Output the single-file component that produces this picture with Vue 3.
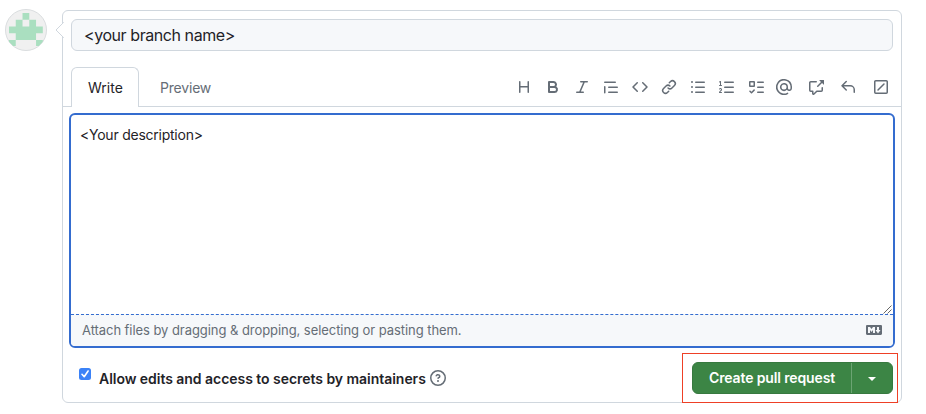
<script setup>
import { ref } from 'vue'

const title = ref('<your branch name>')
const description = ref('<Your description>')

const lines = (x, w) => [2.5, 7.5, 12.5].map(y => `M${x} ${y}h${w}a.75.75 0 0 1 0 1.5h-${w}a.75.75 0 0 1 0-1.5Z`).join('')

const tools = [
  { name: 'Heading', d: 'M3.75 2a.75.75 0 0 1 .75.75V7h7V2.75a.75.75 0 0 1 1.5 0v10.5a.75.75 0 0 1-1.5 0V8.5h-7v4.75a.75.75 0 0 1-1.5 0V2.75A.75.75 0 0 1 3.75 2Z' },
  { name: 'Bold', d: 'M4 2h4.5a3.501 3.501 0 0 1 2.852 5.53A3.499 3.499 0 0 1 9.5 14H4a1 1 0 0 1-1-1V3a1 1 0 0 1 1-1Zm1 7v3h4.5a1.5 1.5 0 0 0 0-3Zm3.5-2a1.5 1.5 0 0 0 0-3H5v3Z' },
  { name: 'Italic', d: 'M6 2.75A.75.75 0 0 1 6.75 2h6.5a.75.75 0 0 1 0 1.5h-2.505l-3.858 9H9.25a.75.75 0 0 1 0 1.5h-6.5a.75.75 0 0 1 0-1.5h2.505l3.858-9H6.75A.75.75 0 0 1 6 2.75Z' },
  { name: 'Quote', d: 'M1.75 2.5h10.5a.75.75 0 0 1 0 1.5H1.75a.75.75 0 0 1 0-1.5Zm4 5h8.5a.75.75 0 0 1 0 1.5h-8.5a.75.75 0 0 1 0-1.5Zm0 5h8.5a.75.75 0 0 1 0 1.5h-8.5a.75.75 0 0 1 0-1.5ZM2.5 7.75v6a.75.75 0 0 1-1.5 0v-6a.75.75 0 0 1 1.5 0Z' },
  { name: 'Code', d: 'm11.28 3.22 4.25 4.25a.75.75 0 0 1 0 1.06l-4.25 4.25a.749.749 0 0 1-1.275-.326.749.749 0 0 1 .215-.734L13.94 8l-3.72-3.72a.749.749 0 0 1 .326-1.275.749.749 0 0 1 .734.215Zm-6.56 0a.751.751 0 0 1 1.042.018.751.751 0 0 1 .018 1.042L2.06 8l3.72 3.72a.749.749 0 0 1-.326 1.275.749.749 0 0 1-.734-.215L.47 8.53a.75.75 0 0 1 0-1.06Z' },
  { name: 'Link', d: 'm7.775 3.275 1.25-1.25a3.5 3.5 0 1 1 4.95 4.95l-2.5 2.5a3.5 3.5 0 0 1-4.95 0 .751.751 0 0 1 .018-1.042.751.751 0 0 1 1.042-.018 1.998 1.998 0 0 0 2.83 0l2.5-2.5a2.002 2.002 0 0 0-2.83-2.83l-1.25 1.25a.751.751 0 0 1-1.042-.018.751.751 0 0 1-.018-1.042Zm-4.69 9.64a1.998 1.998 0 0 0 2.83 0l1.25-1.25a.751.751 0 0 1 1.042.018.751.751 0 0 1 .018 1.042l-1.25 1.25a3.5 3.5 0 1 1-4.95-4.95l2.5-2.5a3.5 3.5 0 0 1 4.95 0 .751.751 0 0 1-.018 1.042.751.751 0 0 1-1.042.018 1.998 1.998 0 0 0-2.83 0l-2.5 2.5a1.998 1.998 0 0 0 0 2.83Z' },
  { name: 'Unordered list', d: lines(5.75, 8.5) + 'M2 14a1 1 0 1 1 0-2 1 1 0 0 1 0 2Zm1-6a1 1 0 1 1-2 0 1 1 0 0 1 2 0ZM2 4a1 1 0 1 1 0-2 1 1 0 0 1 0 2Z' },
  { name: 'Numbered list', d: lines(5.75, 8.5) + 'M.924 10.32a.5.5 0 0 1-.851-.525l.01-.018c.097-.144.215-.273.348-.384.228-.19.588-.392 1.068-.392.468 0 .858.181 1.126.484.259.294.377.673.377 1.038 0 .987-.686 1.495-1.156 1.845l-.047.035c-.303.225-.522.4-.654.597h1.357a.5.5 0 0 1 0 1H.5a.5.5 0 0 1-.5-.5c0-1.005.692-1.52 1.167-1.875l.035-.025c.531-.396.8-.625.8-1.078a.57.57 0 0 0-.128-.376C1.806 10.068 1.695 10 1.5 10a.658.658 0 0 0-.429.163.835.835 0 0 0-.144.153ZM2.003 2.5V6h.503a.5.5 0 0 1 0 1H.5a.5.5 0 0 1 0-1h.503V3.308l-.28.14a.5.5 0 0 1-.446-.895l1.003-.5a.5.5 0 0 1 .723.447Z' },
  { name: 'Task list', d: 'M2 2h4a1 1 0 0 1 1 1v4a1 1 0 0 1-1 1H2a1 1 0 0 1-1-1V3a1 1 0 0 1 1-1Zm4.655 8.595a.75.75 0 0 1 0 1.06L4.03 14.28a.75.75 0 0 1-1.06 0l-1.5-1.5a.749.749 0 0 1 .326-1.275.749.749 0 0 1 .734.215l.97.97 2.095-2.095a.75.75 0 0 1 1.06 0ZM2.5 3.5v3h3v-3Z' + lines(9.75, 5.5) },
  { name: 'Mention', d: 'M4.75 2.37a6.501 6.501 0 0 0 6.5 11.26.75.75 0 0 1 .75 1.298A7.999 7.999 0 0 1 .989 4.148 8 8 0 0 1 16 7.75v1.5a2.75 2.75 0 0 1-5.072 1.475 3.999 3.999 0 0 1-6.65-4.19A4 4 0 0 1 12 8v1.25a1.25 1.25 0 0 0 2.5 0V7.867a6.5 6.5 0 0 0-9.75-5.496ZM10.5 8a2.5 2.5 0 1 0-5 0 2.5 2.5 0 0 0 5 0Z' },
  { name: 'Reference', d: 'M2.75 3.5a.25.25 0 0 0-.25.25v7.5c0 .138.112.25.25.25h2a.75.75 0 0 1 .75.75v2.19l2.72-2.72a.749.749 0 0 1 .53-.22h4.5a.25.25 0 0 0 .25-.25v-2.5a.75.75 0 0 1 1.5 0v2.5A1.75 1.75 0 0 1 13.25 13H9.06l-2.573 2.573A1.458 1.458 0 0 1 4 14.543V13H2.75A1.75 1.75 0 0 1 1 11.25v-7.5C1 2.784 1.784 2 2.75 2h5.5a.75.75 0 0 1 0 1.5ZM16 1.25v4.146a.25.25 0 0 1-.427.177L14.03 4.03l-3.75 3.75a.749.749 0 0 1-1.275-.326.749.749 0 0 1 .215-.734l3.75-3.75-1.543-1.543A.25.25 0 0 1 11.604 1h4.146a.25.25 0 0 1 .25.25Z' },
  { name: 'Saved replies', d: 'M6.78 1.97a.75.75 0 0 1 0 1.06L3.81 6h6.44A4.75 4.75 0 0 1 15 10.75v2.5a.75.75 0 0 1-1.5 0v-2.5a3.25 3.25 0 0 0-3.25-3.25H3.81l2.97 2.97a.749.749 0 0 1-.326 1.275.749.749 0 0 1-.734-.215L1.47 7.28a.75.75 0 0 1 0-1.06l4.25-4.25a.75.75 0 0 1 1.06 0Z' },
  { name: 'Slash commands', d: 'M2.75 1h10.5c.966 0 1.75.784 1.75 1.75v10.5A1.75 1.75 0 0 1 13.25 15H2.75A1.75 1.75 0 0 1 1 13.25V2.75C1 1.784 1.784 1 2.75 1ZM2.5 2.75v10.5c0 .138.112.25.25.25h10.5a.25.25 0 0 0 .25-.25V2.75a.25.25 0 0 0-.25-.25H2.75a.25.25 0 0 0-.25.25Zm9.03 2.78-6 6a.75.75 0 0 1-1.06-1.06l6-6a.75.75 0 0 1 1.06 1.06Z' }
]
</script>

<template>
  <main class="page">
    <svg class="avatar" viewBox="0 0 42 42">
      <circle cx="21" cy="21" r="20.5" fill="#f0f0f0" stroke="#dadddf" />
      <path transform="translate(4 4) scale(6.76)" fill="#aadfc0" d="M2 0h1v1h1v1h1v1h-1v1h-3v-1h-1v-1h1v-1h1ZM2 1v1h1v-1ZM0 4h1v.9h-.4L0 4.25ZM4 4h1v.25L4.4 4.9h-.4Z" />
    </svg>
    <section class="card">
      <svg class="pointer" viewBox="0 0 9 16"><path d="M8.5 0v.5L1 8l7.5 7.5v.5" fill="#fff" stroke="#d0d7de" /></svg>
      <div class="title"><span class="title-text">{{ title }}</span></div>
      <header class="tabs">
        <div class="tab active"><span class="write">Write</span></div>
        <div class="tab"><span class="preview">Preview</span></div>
        <div class="tools">
          <svg v-for="t in tools" :key="t.name" class="icon" viewBox="0 0 16 16" :aria-label="t.name"><path fill-rule="evenodd" :d="t.d" /></svg>
        </div>
      </header>
      <div class="editor">
        <div class="body">
          <span class="desc">{{ description }}</span>
          <svg class="grip" viewBox="0 0 9 9"><path d="M.5 8.5l8-8M4.5 8.5l4-4" stroke="#555" stroke-width=".9" /></svg>
        </div>
        <div class="attach">
          <span class="hint">Attach files by dragging &amp; dropping, selecting or pasting them.</span>
          <svg class="icon" viewBox="0 0 16 16"><path fill-rule="evenodd" d="M14.85 3c.63 0 1.15.52 1.14 1.15v7.7c0 .63-.51 1.15-1.15 1.15H1.15C.52 13 0 12.48 0 11.84V4.15C0 3.52.52 3 1.15 3ZM9 11V5H7L5.5 7 4 5H2v6h2V8l1.5 1.92L7 8v3Zm2.99.5L14.5 8H13V5h-2v3H9.5Z" /></svg>
        </div>
      </div>
      <footer class="actions">
        <svg class="check" viewBox="0 0 12 12"><rect width="12" height="12" rx="2.5" fill="#3b82f7" /><path d="M3 6.3l2.2 2.4L9.1 3" fill="none" stroke="#fff" stroke-width="1.6" stroke-linecap="round" stroke-linejoin="round" /></svg>
        <span class="allow">Allow edits and access to secrets by maintainers</span>
        <svg class="icon help" viewBox="0 0 16 16"><path fill-rule="evenodd" d="M0 8a8 8 0 1 1 16 0A8 8 0 0 1 0 8Zm8-6.5a6.5 6.5 0 1 0 0 13 6.5 6.5 0 0 0 0-13ZM6.92 6.085h.001a.749.749 0 1 1-1.342-.67c.169-.339.436-.701.849-.977C6.845 4.16 7.369 4 8 4a2.756 2.756 0 0 1 1.637.525c.503.377.863.965.863 1.725 0 .448-.115.83-.329 1.15-.205.307-.47.513-.692.662-.109.072-.22.138-.313.195l-.006.004a6.24 6.24 0 0 0-.26.16.952.952 0 0 0-.276.245.75.75 0 0 1-1.248-.832c.184-.264.42-.489.692-.661.103-.067.207-.132.313-.195l.007-.004c.1-.061.182-.11.258-.161a.969.969 0 0 0 .277-.245C8.96 6.514 9 6.427 9 6.25a.612.612 0 0 0-.262-.525A1.27 1.27 0 0 0 8 5.5c-.369 0-.595.09-.74.187a1.01 1.01 0 0 0-.34.398ZM9 11a1 1 0 1 1-2 0 1 1 0 0 1 2 0Z" /></svg>
        <div class="split">
          <div class="create"><span class="create-text">Create pull request</span></div>
          <div class="more"><svg class="caret" viewBox="0 0 8 4"><path d="M0 0h8L4 4Z" fill="#fff" /></svg></div>
          <div class="highlight"></div>
        </div>
      </footer>
    </section>
  </main>
</template>

<style>
body { background: #fff; }
</style>

<style scoped>
* { box-sizing: border-box; }
.page {
  display: flex;
  align-items: flex-start;
  gap: 15px;
  height: 414px;
  padding: 9px 24px 0 5px;
  font-family: Inter, "Liberation Sans", sans-serif;
  font-size: 14px;
  line-height: 20px;
  color: #1f2328;
  white-space: nowrap;
  overflow: hidden;
}
svg { display: block; flex: none; }
.avatar { width: 42px; height: 42px; }
.card {
  position: relative;
  flex: none;
  width: 840px;
  height: 393px;
  margin-top: 1px;
  border: 1px solid #d0d7de;
  border-radius: 6px;
}
.pointer { position: absolute; left: -8px; top: 11px; width: 9px; height: 16px; }
.title {
  display: flex;
  align-items: center;
  height: 32px;
  margin: 8px 8px 0;
  padding-left: 12px;
  border: 1px solid #d0d7de;
  border-radius: 6px;
  background: #f6f8fa;
  font-size: 16px;
}
.title-text { letter-spacing: -0.43px; }
.preview { letter-spacing: -0.2px; }
.desc { letter-spacing: -0.24px; }
.hint { letter-spacing: -0.06px; }
.create-text { letter-spacing: -0.13px; }
.tabs {
  display: flex;
  height: 40px;
  margin-top: 16px;
  padding-left: 8px;
  box-shadow: inset 0 -1px #d0d7de;
}
.tab { display: flex; align-items: center; padding: 2px 0 0 21px; color: #656d76; }
.tab.active {
  width: 68px;
  padding: 1px 0 0 16px;
  border: 1px solid #d0d7de;
  border-bottom: 0;
  border-radius: 6px 6px 0 0;
  background: #fff;
  color: #1f2328;
}
.tools { display: flex; align-items: center; gap: 13px; margin: 0 12px 0 auto; }
.icon { width: 16px; height: 16px; fill: #656d76; }
.tools .icon:nth-child(10) { margin-left: -1px; }
.tools .icon:nth-child(n+11) { margin-left: 3px; }
.tools .icon:nth-child(13) { margin-left: 4px; }
.editor {
  display: flex;
  flex-direction: column;
  height: 235px;
  margin: 6px 6px 0;
  border: 2px solid #346ccf;
  border-radius: 6px;
  overflow: hidden;
}
.body { display: flex; justify-content: space-between; flex: 1; padding: 10px 1px 0 9px; }
.grip { align-self: flex-end; width: 9px; height: 9px; }
.attach {
  display: flex;
  align-items: center;
  justify-content: space-between;
  height: 32px;
  padding: 0 11px 1px;
  border-top: 1px dashed #346ccf;
  background: #f6f8fa;
  color: #656d76;
  font-size: 13px;
}
.actions { display: flex; align-items: center; height: 32px; margin-top: 14px; padding: 0 8px 0 16px; }
.check { width: 12px; height: 12px; margin: 0 8px 8px 0; }
.allow { font-weight: 600; padding-top: 1px; letter-spacing: -0.04px; }
.help { margin-left: 4px; }
.split {
  position: relative;
  display: flex;
  width: 201px;
  height: 32px;
  margin-left: auto;
  border: 1px solid #37793f;
  border-radius: 6px;
  background: #3c8545;
  color: #fff;
  font-weight: 600;
}
.create { display: flex; align-items: center; width: 159px; padding-left: 16px; border-right: 1px solid #6ca473; }
.more { display: flex; align-items: center; justify-content: center; flex: 1; }
.caret { width: 8px; height: 4px; margin-top: 2px; }
.highlight { position: absolute; left: -11px; top: -10px; width: 216px; height: 50px; border: 1px solid #ee4026; }
</style>
